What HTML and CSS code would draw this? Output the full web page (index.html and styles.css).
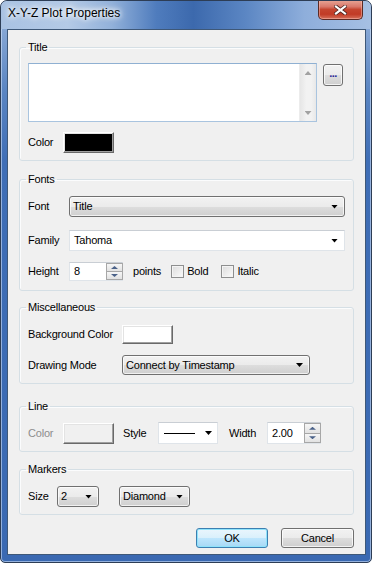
FILE: index.html
```html
<!DOCTYPE html>
<html>
<head>
<meta charset="utf-8">
<link rel="stylesheet" href="styles.css">
</head>
<body>
<div class="window">
  <div class="titlebar">
    <span class="title">X-Y-Z Plot Properties</span>
    <div class="close">
      <svg width="13" height="10" viewBox="0 0 13 10">
        <path d="M2 1.5 L11 8.5 M11 1.5 L2 8.5" stroke="#4a2420" stroke-width="3.6" stroke-linecap="square"/>
        <path d="M2 1.5 L11 8.5 M11 1.5 L2 8.5" stroke="#ffffff" stroke-width="2.2" stroke-linecap="square"/>
      </svg>
    </div>
  </div>
  <div class="client">
    <fieldset class="group g-title">
      <legend>Title</legend>
      <div class="row top">
        <div class="memo">
          <div class="vscroll"><span class="sarrow up"></span><span class="sarrow down"></span></div>
        </div>
        <div class="btn dots">...</div>
      </div>
      <div class="row r2">
        <span class="lbl w35">Color</span>
        <span class="swatch black"></span>
      </div>
    </fieldset>

    <fieldset class="group g-fonts">
      <legend>Fonts</legend>
      <div class="row h21">
        <span class="lbl w41">Font</span>
        <div class="combo ro w276"><span class="val">Title</span><span class="arrow"></span></div>
      </div>
      <div class="row h21 r-family">
        <span class="lbl w41">Family</span>
        <div class="combo ed w276"><span class="val v2">Tahoma</span><span class="arrow"></span></div>
      </div>
      <div class="row h19 r-height">
        <span class="lbl w41">Height</span>
        <div class="spin w54"><span class="val">8</span><div class="spinbtns"><span class="sb"><i class="up"></i></span><span class="sb"><i class="dn"></i></span></div></div>
        <span class="lbl points">points</span>
        <span class="chk"><span class="box"></span>Bold</span>
        <span class="chk italic"><span class="box"></span>Italic</span>
      </div>
    </fieldset>

    <fieldset class="group g-misc">
      <legend>Miscellaneous</legend>
      <div class="row h19">
        <span class="lbl w94">Background Color</span>
        <span class="swatch white"></span>
      </div>
      <div class="row h20 r-mode">
        <span class="lbl w94">Drawing Mode</span>
        <div class="combo ro w188"><span class="val">Connect by Timestamp</span><span class="arrow"></span></div>
      </div>
    </fieldset>

    <fieldset class="group g-line">
      <legend>Line</legend>
      <div class="row h22">
        <span class="lbl w35 disabled">Color</span>
        <span class="swatch gray"></span>
        <span class="lbl style-lbl">Style</span>
        <div class="combo ed w60 h22"><span class="linesample"></span><span class="arrow a8"></span></div>
        <span class="lbl width-lbl">Width</span>
        <div class="spin w54 h22"><span class="val">2.00</span><div class="spinbtns"><span class="sb"><i class="up"></i></span><span class="sb"><i class="dn"></i></span></div></div>
      </div>
    </fieldset>

    <fieldset class="group g-markers">
      <legend>Markers</legend>
      <div class="row h21">
        <span class="lbl w29">Size</span>
        <div class="combo ro w42"><span class="val">2</span><span class="arrow"></span></div>
        <div class="combo ro w71 diamond"><span class="val">Diamond</span><span class="arrow"></span></div>
      </div>
    </fieldset>

    <div class="buttons">
      <div class="btn ok">OK</div>
      <div class="btn cancel">Cancel</div>
    </div>
  </div>
</div>
</body>
</html>
```

FILE: styles.css
```css
* { box-sizing: border-box; }
html, body { margin: 0; padding: 0; background: #ffffff; }
body {
  font-family: "Liberation Sans", Arial, sans-serif;
  font-size: 11px;
  letter-spacing: -0.2px;
  color: #000;
}
.window {
  width: 372px;
  height: 563px;
  border: 1px solid #2d3d55;
  border-radius: 7px 7px 5px 5px;
  background: linear-gradient(to bottom, #9ab6dd 0px, #5a85c2 90px, #3f6eb6 160px, #3a69b2 100%);
  box-shadow: inset 0 0 0 1px rgba(220, 235, 255, 0.55);
  display: flex;
  flex-direction: column;
  overflow: hidden;
}
.titlebar {
  height: 28px;
  flex: none;
  display: flex;
  align-items: flex-start;
  background: linear-gradient(to right, #a9c2e2 0%, #b4cae6 18%, #92b1da 30%, #4f7cbd 42%, #3c69ad 52%, #5b86c3 66%, #8eaedb 82%, #a6c0e3 100%);
  border-radius: 6px 6px 0 0;
}
.title {
  margin: 5px 0 0 7px;
  font-size: 12px;
  letter-spacing: 0;
  line-height: 15px;
  color: #000;
  text-shadow: 0 0 8px #fff, 0 0 6px #fff, 0 0 4px rgba(255,255,255,0.9);
}
.close {
  margin-left: auto;
  margin-right: 8px;
  margin-top: -1px;
  width: 45px;
  height: 20px;
  border: 1px solid #5b2a24;
  border-top: none;
  border-radius: 0 0 5px 5px;
  background: linear-gradient(to bottom, #e8a797 0%, #d8786a 35%, #c5452f 50%, #c13b26 75%, #d6705a 100%);
  box-shadow: inset 0 0 0 1px rgba(255, 200, 190, 0.45);
  display: flex;
  align-items: center;
  justify-content: center;
}
.client {
  flex: 1;
  margin: 0 5px 7px 6px;
  border: 1px solid #3e5878;
  background: #f0f0f0;
  padding: 11px 11px 0 11px;
}
.group {
  margin: 0;
  min-width: 0;
  border: 1px solid #d5dfe5;
  border-radius: 3px;
  padding: 0 8px;
  box-shadow: inset 1px 1px 0 #fbfcfd;
}
.group legend {
  padding: 0 2px;
  margin-left: -2px;
  line-height: 12px;
  font-size: 11px;
}
.g-title { padding-top: 10px; padding-bottom: 7px; }
.g-fonts { margin-top: 12px; padding-top: 11px; padding-bottom: 9px; }
.g-misc { margin-top: 10px; padding-top: 12px; padding-bottom: 8px; }
.g-line { margin-top: 16px; padding-top: 10px; padding-bottom: 7px; }
.g-markers { margin-top: 11px; padding-top: 11px; padding-bottom: 7px; }

.row { display: flex; align-items: center; }
.row.top { align-items: flex-start; }
.r2 { margin-top: 10px; height: 21px; }
.h19 { height: 19px; }
.h20 { height: 20px; }
.h21 { height: 21px; }
.h22 { height: 22px; }
.r-family { margin-top: 13px; }
.r-height { margin-top: 11px; }
.r-mode { margin-top: 11px; }

.lbl { white-space: nowrap; line-height: 13px; }
.w29 { width: 29px; flex: none; }
.w35 { width: 35px; flex: none; }
.w41 { width: 41px; flex: none; }
.w94 { width: 94px; flex: none; }
.disabled { color: #8d8d8d; }

.memo {
  width: 289px;
  height: 59px;
  background: #fff;
  border: 1px solid #a9c4df;
  border-top-color: #8fb0d2;
  display: flex;
  justify-content: flex-end;
}
.vscroll {
  width: 17px;
  height: 100%;
  background: linear-gradient(to right, #e6e6e6, #f2f2f2 40%, #f2f2f2 70%, #e8e8e8);
  border-left: 1px solid #ececec;
  display: flex;
  flex-direction: column;
  justify-content: space-between;
  align-items: center;
  padding: 7px 0 6px;
}
.sarrow {
  width: 7px;
  height: 4px;
  background: #a2a2a2;
}
.sarrow.up { clip-path: polygon(50% 0, 100% 100%, 0 100%); }
.sarrow.down { clip-path: polygon(0 0, 100% 0, 50% 100%); }

.btn {
  display: flex;
  align-items: center;
  justify-content: center;
  border: 1px solid #707070;
  border-radius: 3px;
  background: linear-gradient(to bottom, #f2f2f2 0%, #ebebeb 50%, #dddddd 51%, #cfcfcf 100%);
  box-shadow: inset 0 0 0 1px rgba(255,255,255,0.75);
  line-height: 13px;
}
.dots {
  width: 20px;
  height: 22px;
  margin: 1px 0 0 6px;
  color: #2a2a9a;
  font-weight: bold;
  letter-spacing: -0.5px;
  padding-bottom: 3px;
}

.swatch {
  width: 51px;
  height: 21px;
  flex: none;
  border: 1px solid;
  border-color: #ffffff #696969 #696969 #ffffff;
  box-shadow: inset -1px -1px 0 #a0a0a0, inset 1px 1px 0 #e3e3e3;
}
.swatch.black { background: #000; }
.swatch.white { background: #fff; height: 19px; }
.swatch.gray { background: #f0f0f0; }

.combo {
  height: 100%;
  flex: none;
  display: flex;
  align-items: center;
  position: relative;
  padding-left: 3px;
}
.combo.ro {
  border: 1px solid #707070;
  border-radius: 3px;
  background: linear-gradient(to bottom, #f2f2f2 0%, #ebebeb 50%, #dddddd 51%, #cfcfcf 100%);
  box-shadow: inset 0 0 0 1px rgba(255,255,255,0.7);
}
.combo.ed {
  border: 1px solid #dfe4e9;
  border-top-color: #c9ced4;
  background: #fff;
}
.combo .val { line-height: 13px; white-space: nowrap; }
.combo .v2 { padding-left: 1px; }
.combo .arrow {
  margin-left: auto;
  margin-right: 6px;
  width: 7px;
  height: 4px;
  background: #000;
  clip-path: polygon(0 0, 100% 0, 50% 100%);
}
.combo .arrow.a8 { margin-right: 5px; }
.w276 { width: 276px; }
.w188 { width: 188px; }
.w60 { width: 60px; margin-left: 0; }
.w42 { width: 42px; }
.w71 { width: 71px; }
.diamond { margin-left: 20px; }
.linesample {
  width: 31px;
  height: 1px;
  background: #000;
  margin-left: 2px;
}

.spin {
  height: 100%;
  flex: none;
  display: flex;
  align-items: center;
  background: #fff;
  border: 1px solid #dfe4e9;
  border-top-color: #c9ced4;
  padding-left: 4px;
}
.spin .val { line-height: 13px; }
.w54 { width: 54px; }
.spinbtns {
  margin-left: auto;
  width: 17px;
  height: 100%;
  display: flex;
  flex-direction: column;
  margin-right: -1px;
}
.sb {
  flex: 1;
  border: 1px solid #a7a7a7;
  background: linear-gradient(to bottom, #f6f6f6, #e2e2e2);
  display: flex;
  align-items: center;
  justify-content: center;
}
.sb + .sb { border-top: none; }
.sb i {
  display: block;
  width: 7px;
  height: 3px;
  background: #4b6289;
}
.sb i.up { clip-path: polygon(50% 0, 100% 100%, 0 100%); }
.sb i.dn { clip-path: polygon(0 0, 100% 0, 50% 100%); }

.points { margin-left: 10px; }
.chk {
  display: flex;
  align-items: center;
  white-space: nowrap;
  line-height: 13px;
  margin-left: 10px;
}
.chk.italic { margin-left: 13px; }
.chk .box {
  width: 13px;
  height: 13px;
  margin-right: 3px;
  border: 1px solid #8e8f8f;
  background: linear-gradient(135deg, #dcdcdc, #fbfbfb);
  box-shadow: inset 0 0 0 1px #f4f4f4;
}

.style-lbl { margin-left: 9px; width: 35px; }
.width-lbl { margin-left: 11px; width: 38px; }

.buttons {
  margin-top: 13px;
  display: flex;
  justify-content: flex-end;
}
.buttons .btn { height: 20px; }
.ok {
  width: 72px;
  border-color: #3c7fb1;
  background: linear-gradient(to bottom, #eaf6fd 0%, #d9f0fc 50%, #bee6fd 51%, #a7d9f5 100%);
  box-shadow: inset 0 0 0 1px #8fe3fb;
}
.cancel { width: 73px; margin-left: 13px; }
```
